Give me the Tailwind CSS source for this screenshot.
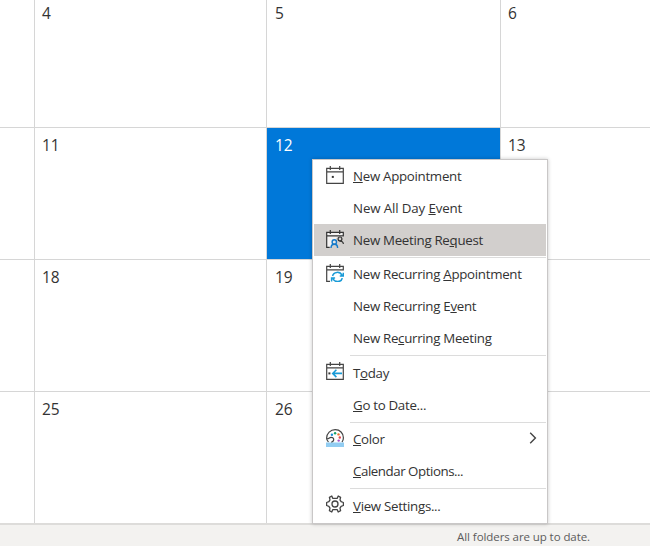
<!DOCTYPE html>
<html lang="en">

<head>
  <meta charset="utf-8"/>
  <meta content="width=device-width, initial-scale=1.0" name="viewport"/>
  <title>Calendar</title>
  <script src="https://cdn.jsdelivr.net/npm/@tailwindcss/browser@4"></script>
</head>

<body class="relative flex h-[546px] w-[650px] flex-col overflow-hidden bg-white font-['Open_Sans','Noto_Sans',sans-serif] text-[#333]">

<!-- Month grid -->
<main class="grid h-[523px] grid-cols-[35px_232px_234px_1fr] grid-rows-[128px_132px_132px_131px] text-[15.5px] leading-[20px] *:border-[#d6d6d6] *:px-[7px]">
  <div class="border-r border-b"></div>
  <div class="border-r border-b pt-[3px]">4</div>
  <div class="border-r border-b pt-[3px] pl-[8px]!">5</div>
  <div class="border-b pt-[3px]">6</div>

  <div class="border-r border-b"></div>
  <div class="border-r border-b pt-[7px]">11</div>
  <div class="border-r border-b bg-[#0078d9] bg-clip-padding pt-[7px] pl-[8px]! text-white">12</div>
  <div class="border-b pt-[7px]">13</div>

  <div class="border-r border-b"></div>
  <div class="border-r border-b pt-[7px]">18</div>
  <div class="border-r border-b pt-[7px] pl-[8px]!">19</div>
  <div class="border-b"></div>

  <div class="border-r"></div>
  <div class="border-r pt-[7px]">25</div>
  <div class="border-r pt-[7px] pl-[8px]!">26</div>
  <div></div>
</main>

<!-- Status bar -->
<footer class="flex h-[23px] items-center justify-end border-t-2 border-[#dddcda] bg-[#f3f2f0] pt-[3px] pr-[60px] text-[11.5px] tracking-[-0.08px] text-[#5c5c5c]">
  <span id="status">All folders are up to date.</span>
</footer>

<!-- Context menu -->
<nav class="absolute top-[159px] left-[312px] flex h-[365px] w-[236px] flex-col border border-[#c9c7c7] bg-white px-px text-[13.3px] leading-[32px] tracking-[-0.3px] shadow-[0_0_4px_rgba(0,0,0,0.22)]">
  <a class="flex h-8 items-center pl-[12px]">
    <svg class="mr-[9px] size-[18px] -translate-y-px" viewBox="0 0 18 18" fill="none" stroke="#444" stroke-width="1.2">
      <path d="M.7 2.3h16.6v15H.7zM.7 5.9h16.6M4.3 0v4M13.7 0v4"/>
      <path d="M5.8 9.9h2v2h-2z" fill="#333" stroke="none"/>
    </svg>
    <span><u>N</u>ew Appointment</span>
  </a>
  <a class="flex h-8 items-center pl-[39px] tracking-[-0.13px]"><span>New All Day <u>E</u>vent</span></a>
  <a class="flex h-8 items-center bg-[#d2cfcd] pl-[12px]">
    <svg class="mr-[9px] size-[18px] -translate-y-px" viewBox="0 0 18 18" fill="none" stroke="#333" stroke-width="1.2">
      <path d="M.7 2.3h16.6v15H.7z" fill="#f4f3f3" stroke="none"/>
      <path d="M11 7.3h7V18H4.2z" fill="#d2cfcd" stroke="none"/>
      <path d="M3.7 17.3h-3v-15h16.6v3.6H.7M4.3 0v4M13.7 0v4"/>
      <circle cx="14" cy="8.9" r="1.9"/>
      <path d="M13.6 11.4c2.2-.6 3.7.6 3.8 2.6"/>
      <g stroke="#1379c9" stroke-width="1.4">
        <circle cx="8.3" cy="11.9" r="2.2" fill="#e6e5e5"/>
        <path d="M5 18c0-5 6.600-5 6.600 0"/>
      </g>
    </svg>
    <span>New Meeting Re<u>q</u>uest</span>
  </a>
  <hr class="mt-px mb-0 ml-[36px] h-px border-0 bg-[#dcdcdc]"/>
  <a class="flex h-8 items-center pl-[12px]">
    <svg class="mr-[9px] size-[18px] -translate-y-px" viewBox="0 0 18 18" fill="none" stroke="#444" stroke-width="1.2">
      <path d="M4 17.3H.7v-15h16.6v4.2M.7 5.9h16.6M4.3 0v4M13.7 0v4"/>
      <g stroke="#199bd7" stroke-width="1.5">
        <path d="M6.600 12c.8-4.400 7.400-5 9.400-.7M16.300 14.200c-.9 4.200-7.400 4.700-9.400.5M17.300 8.700v3.400h-3.500M5.600 17.400V14h3.500"/>
      </g>
    </svg>
    <span>New Recurring <u>A</u>ppointment</span>
  </a>
  <a class="flex h-8 items-center pl-[39px]"><span>New Recurring E<u>v</u>ent</span></a>
  <a class="flex h-8 items-center pl-[39px]"><span>New Re<u>c</u>urring Meeting</span></a>
  <hr class="mt-px mb-px ml-[36px] h-px border-0 bg-[#dcdcdc]"/>
  <a class="flex h-8 items-center pl-[12px]">
    <svg class="mr-[9px] size-[18px] -translate-y-[2px]" viewBox="0 0 18 18" fill="none" stroke="#444" stroke-width="1.2">
      <path d="M.7 2.3h16.6v15H.7zM.7 5.9h16.6M4.3 0v4M13.7 0v4"/>
      <path d="M2.4 10.4h2v2h-2z" fill="#333" stroke="none"/>
      <path d="M16 11.400H6.800M10.400 7.700l-3.700 3.700 3.700 3.700" stroke="#199bd7" stroke-width="1.6"/>
    </svg>
    <span>T<u>o</u>day</span>
  </a>
  <a class="flex h-8 items-center pl-[39px]"><span><u>G</u>o to Date...</span></a>
  <hr class="mt-px mb-0 ml-[36px] h-px border-0 bg-[#dcdcdc]"/>
  <a class="flex h-8 items-center pl-[12px]">
    <svg class="mr-[9px] size-[18px] -translate-y-px" viewBox="0 0 18 18" fill="none" stroke="#444" stroke-width="1.2">
      <path d="M2.500 13C.9 11.500.6 10.500.6 9.300.6 4.400 4.500.7 9.200.7s8.200 3.500 8.200 8c0 1.900-.5 3.300-1.400 4.500M.8 9.600c1.700.8 2.300-1.300 4.300-1.300 1.900 0 3 1.400 2.500 3-.3 1-1.300 1.900-2.500 2"/>
      <path d="M0 13.500h18V18H0z" fill="#92cdf2" stroke="none"/>
      <g stroke="none">
        <circle cx="5.900" cy="5.700" r="1.200" fill="#1a8fd8"/>
        <circle cx="9.100" cy="4.300" r="1.200" fill="#17a267"/>
        <circle cx="12.500" cy="5.400" r="1.200" fill="#f0742e"/>
        <circle cx="13.800" cy="8.500" r="1.200" fill="#e5404d"/>
        <circle cx="12.700" cy="11.600" r="1.200" fill="#a34fc4"/>
      </g>
    </svg>
    <span><u>C</u>olor</span>
    <svg class="mr-[9px] ml-auto h-[12px] w-[8px] -translate-y-px" viewBox="0 0 8 12" fill="none" stroke="#444" stroke-width="1.4"><path d="M1.200.8 6.400 6l-5.200 5.200"/></svg>
  </a>
  <a class="flex h-8 items-center pl-[39px] tracking-[-0.45px]"><span><u>C</u>alendar Options...</span></a>
  <hr class="mt-px mb-px ml-[36px] h-px border-0 bg-[#dcdcdc]"/>
  <a class="flex h-8 items-center pl-[12px]">
    <svg class="mr-[9px] size-[18px] -translate-y-[2px]" viewBox="0 0 18 18" fill="none" stroke="#444" stroke-width="1.3" stroke-linejoin="round">
      <path d="M6.700 3.300 5.800 1 3.400 2.400l.6 2.500L2.900 6.700.6 7.500v3l2.300.8L4 13.100l-.6 2.500L5.800 17l.9-2.300h4.600l.9 2.300 2.400-1.400-.6-2.500 1.100-1.800 2.300-.8v-3l-2.300-.8L14 4.900l.6-2.500L12.200 1l-.9 2.300z"/>
      <circle cx="9" cy="9" r="3"/>
    </svg>
    <span><u>V</u>iew Settings...</span>
  </a>
</nav>

</body>
</html>
